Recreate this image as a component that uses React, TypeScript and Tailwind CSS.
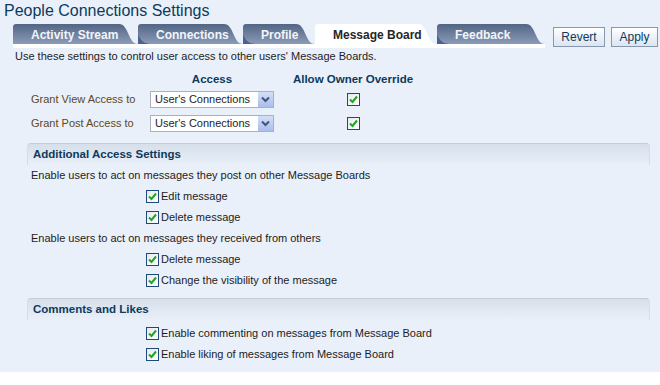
import React from 'react';

type TabProps = {
  id: string;
  label: string;
  width: number;
  className: string;
  selected?: boolean;
  first?: boolean;
};

function Tab({ id, label, width, className, selected, first }: TabProps) {
  const w = width;
  const shape = `M0 20 L0 3 Q0 0 3 0 L${w - 19} 0 C${w - 9} 0 ${w - 10} 20 ${w} 20 Z`;
  return (
    <div className={`relative h-[20px] shrink-0 ${className}`}>
      <svg className="absolute inset-0" width={w} height={20} viewBox={`0 0 ${w} 20`}>
        <defs>
          <linearGradient id={`tab-${id}`} x1="0" y1="0" x2="0" y2="1">
            <stop offset="0" stopColor="#526584" />
            <stop offset="1" stopColor="#8b9bb8" />
          </linearGradient>
        </defs>
        <path d={shape} fill={selected ? '#ffffff' : `url(#tab-${id})`} />
        {!first && !selected && <path d="M0 10 C2 16 6 20 13 20 L0 20 Z" fill="#4a6391" />}
      </svg>
      <span
        className={`relative block pl-[18px] pt-[3px] text-[12px] leading-[17px] font-bold whitespace-nowrap ${
          selected ? 'text-[#262626]' : 'text-[#f2f5fa]'
        }`}
      >
        {label}
      </span>
    </div>
  );
}

function Check() {
  return (
    <span className="w-[13px] h-[13px] shrink-0 border border-[#1d4a78] bg-linear-to-br from-[#e6eaee] to-white flex items-center justify-center">
      <svg width="11" height="11" viewBox="0 0 11 11">
        <path d="M2 5.5 L4.5 8 L9 2.5" fill="none" stroke="#22a322" strokeWidth="2" />
      </svg>
    </span>
  );
}

function Select() {
  return (
    <div className="w-[124px] h-[17px] shrink-0 border border-[#a9b1bc] bg-white flex items-center justify-between">
      <span className="pl-[4px] text-[11px] text-[#1c1c1c] leading-[15px]">User's Connections</span>
      <span className="w-[15px] h-[15px] bg-linear-to-b from-[#d4e0f8] to-[#a9bdea] flex items-center justify-center">
        <svg width="9" height="7" viewBox="0 0 9 7">
          <path d="M1 1.5 L4.5 5 L8 1.5" fill="none" stroke="#44557a" strokeWidth="2" />
        </svg>
      </span>
    </div>
  );
}

function SectionHeader({ title }: { title: string }) {
  return (
    <div className="h-[22px] rounded-t-[4px] border-t border-x border-t-[#c4ccd7] border-x-[#d6dde6] bg-linear-to-b from-[#d6dfea] to-[#eaf0fa] pl-[5px] pt-[3px] text-[11.5px] leading-[14px] font-bold text-[#0d3a5b]">
      {title}
    </div>
  );
}

function TextRow({ text }: { text: string }) {
  return <div className="h-[21px] flex items-center text-[11px] text-[#1c1c1c]">{text}</div>;
}

function CheckRow({ text }: { text: string }) {
  return (
    <div className="h-[21px] flex items-center pl-[115px] gap-[2px] text-[11px] text-[#1c1c1c]">
      <Check />
      <span>{text}</span>
    </div>
  );
}

export default function App() {
  return (
    <div className="w-[660px] h-[385px] bg-white overflow-hidden font-['Liberation_Sans',Arial,sans-serif]">
      <div className="h-[372px] bg-[#eaf0fa]">
        <div className="h-[24px] pl-[4px] pt-[1px] text-[16px] leading-[20px] text-[#0c3a5c]">
          People Connections Settings
        </div>

        <div className="flex">
          <div className="ml-[13px] flex flex-col">
            <div className="flex">
              <Tab id="a" label="Activity Stream" width={125} className="w-[125px]" first />
              <Tab id="c" label="Connections" width={105} className="w-[105px]" />
              <Tab id="p" label="Profile" width={72} className="w-[72px]" />
              <Tab id="m" label="Message Board" width={122} className="w-[122px]" selected />
              <Tab id="f" label="Feedback" width={108} className="w-[108px]" />
            </div>
            <div className="h-[4px] w-[532px] bg-white" />
          </div>
          <div className="ml-[8px] mt-[3px] flex gap-[6px]">
            <button className="w-[52px] h-[20px] border border-[#8797ad] bg-linear-to-b from-white to-[#dbe4f0] text-[12px] text-[#0c3a5c]">
              Revert
            </button>
            <button className="w-[47px] h-[20px] border border-[#8797ad] bg-linear-to-b from-white to-[#dbe4f0] text-[12px] text-[#0c3a5c]">
              Apply
            </button>
          </div>
        </div>

        <div className="mt-[1px] pl-[15px] text-[11px] leading-[14px] text-[#1c1c1c]">
          Use these settings to control user access to other users' Message Boards.
        </div>

        <div className="mt-[9px] flex h-[14px] text-[11.5px] leading-[14px] font-bold text-[#0c3a5b]">
          <div className="w-[150px]" />
          <div className="w-[124px] text-center">Access</div>
          <div className="w-[158px] text-center">Allow Owner Override</div>
        </div>
        <div className="mt-[5px] flex items-center h-[17px]">
          <div className="w-[150px] pl-[31px] text-[11px] text-[#5a4921]">Grant View Access to</div>
          <Select />
          <div className="w-[158px] flex justify-center">
            <Check />
          </div>
        </div>
        <div className="mt-[7px] flex items-center h-[17px]">
          <div className="w-[150px] pl-[31px] text-[11px] text-[#5a4921]">Grant Post Access to</div>
          <Select />
          <div className="w-[158px] flex justify-center">
            <Check />
          </div>
        </div>

        <div className="ml-[27px] mt-[11px] w-[623px]">
          <SectionHeader title="Additional Access Settings" />
          <div className="pl-[4px]">
            <TextRow text="Enable users to act on messages they post on other Message Boards" />
            <CheckRow text="Edit message" />
            <CheckRow text="Delete message" />
            <TextRow text="Enable users to act on messages they received from others" />
            <CheckRow text="Delete message" />
            <CheckRow text="Change the visibility of the message" />
          </div>
        </div>

        <div className="ml-[27px] mt-[7px] w-[623px]">
          <SectionHeader title="Comments and Likes" />
          <div className="pl-[4px] pt-[3px]">
            <CheckRow text="Enable commenting on messages from Message Board" />
            <CheckRow text="Enable liking of messages from Message Board" />
          </div>
        </div>
      </div>
    </div>
  );
}
